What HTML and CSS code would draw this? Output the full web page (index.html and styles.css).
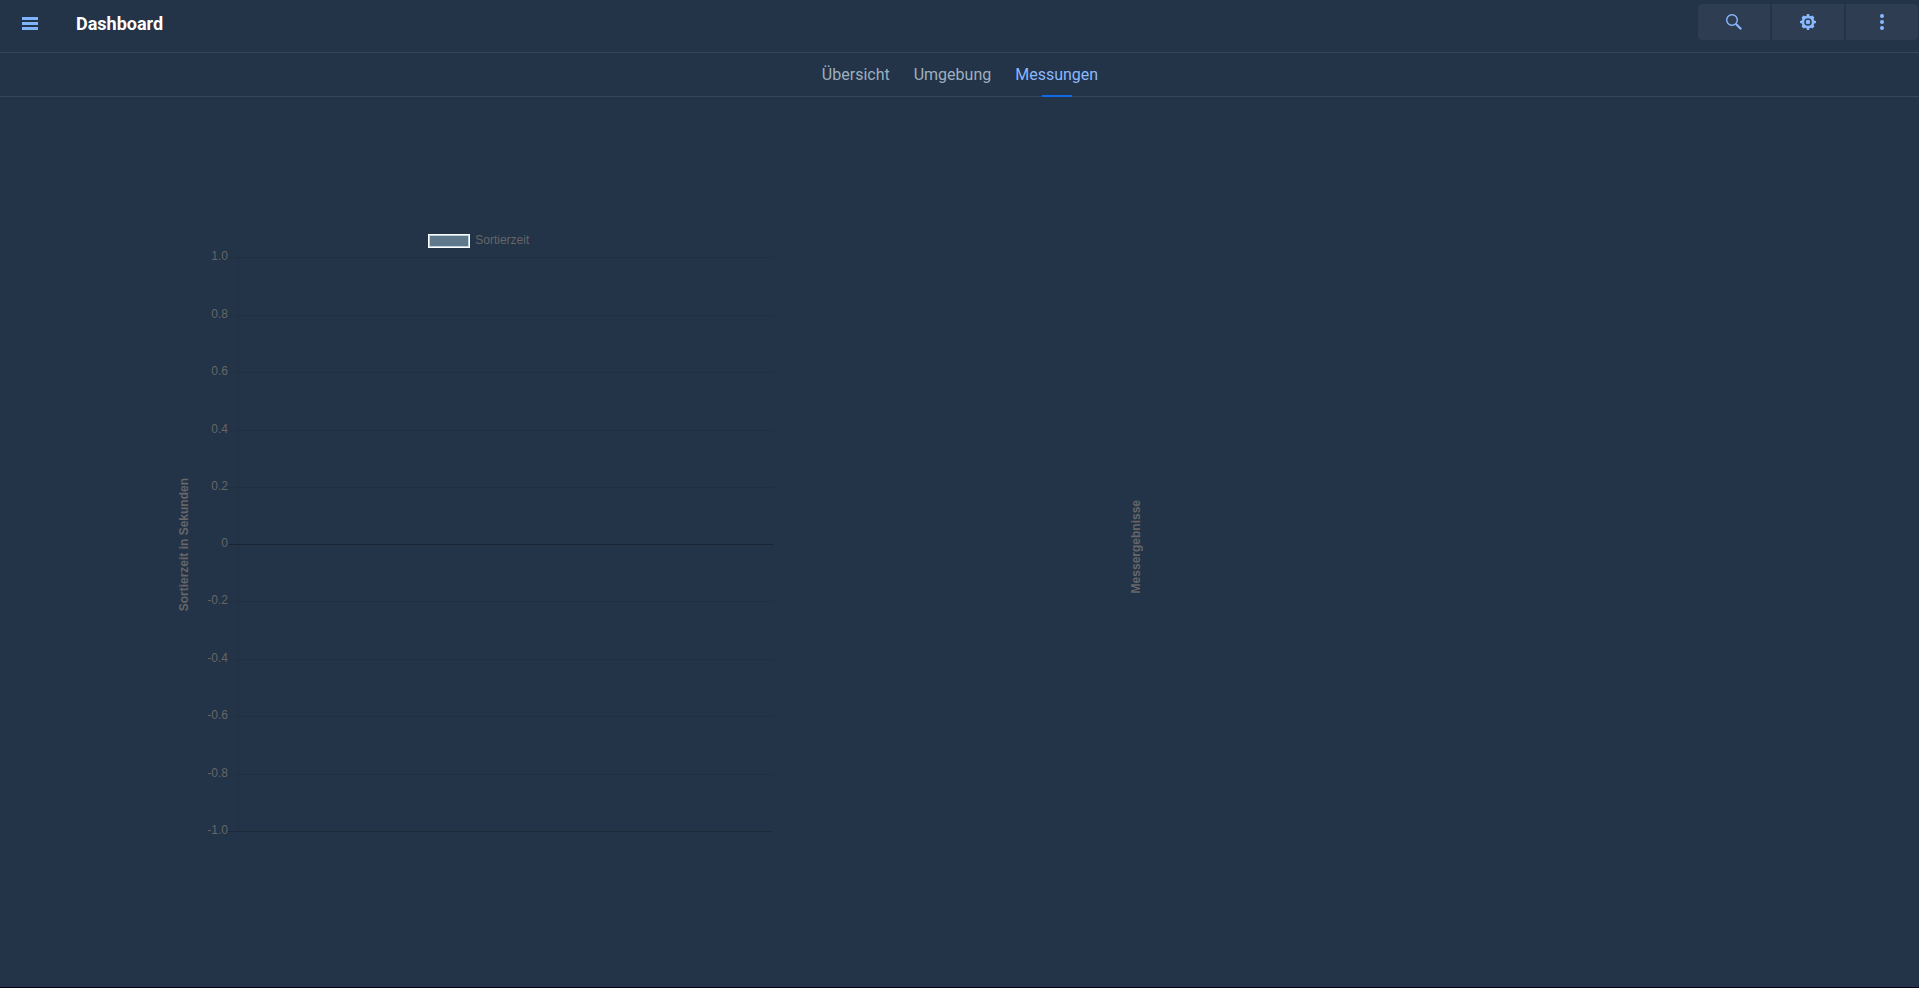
FILE: index.html
```html
<!DOCTYPE html>
<html lang="de">
<head>
<meta charset="utf-8">
<meta name="viewport" content="width=device-width, initial-scale=1">
<title>Dashboard</title>
<link rel="stylesheet" href="styles.css">
</head>
<body>
<header class="topbar">
  <button class="menu-button" type="button" aria-label="Menü">
    <svg class="menu-icon" viewBox="0 0 16 13" aria-hidden="true"><path d="M0 0h16v3H0zM0 5h16v3H0zM0 10h16v3H0z"/></svg>
  </button>
  <h1 class="title">Dashboard</h1>
  <div class="actions">
    <button class="action" type="button" aria-label="Suche">
      <svg class="action-icon" viewBox="0 0 16 16" fill="none" stroke="currentColor" aria-hidden="true"><circle cx="6" cy="6" r="5.3" stroke-width="1.4"/><path d="M10 10l5.2 5.2" stroke-width="2.2"/></svg>
    </button>
    <button class="action" type="button" aria-label="Einstellungen">
      <svg class="action-icon" viewBox="0 0 16 16" aria-hidden="true"><path fill="currentColor" fill-rule="evenodd" d="M7 0h2l.5 1.8 1.3.5L12.5 1.600l1.900 1.900-.7 1.700.5 1.300L16 7v2l-1.800.5-.5 1.300.7 1.700-1.900 1.900-1.700-.7-1.300.5L9 16H7l-.5-1.800-1.300-.5-1.700.7-1.900-1.900.7-1.700-.5-1.300L0 9V7l1.800-.5.5-1.300-.7-1.700 1.900-1.900 1.700.7 1.300-.5zM8 4.200a3.800 3.800 0 1 0 0 7.600 3.800 3.800 0 0 0 0-7.600z"/><circle cx="8" cy="8" r="2.300" fill="currentColor"/></svg>
    </button>
    <button class="action" type="button" aria-label="Mehr">
      <svg class="action-icon" viewBox="0 0 16 16" fill="currentColor" aria-hidden="true"><circle cx="8" cy="2" r="2"/><circle cx="8" cy="8" r="2"/><circle cx="8" cy="14" r="2"/></svg>
    </button>
  </div>
</header>
<nav class="tabs" aria-label="Ansichten">
  <a class="tab" href="#uebersicht">Übersicht</a>
  <a class="tab" href="#umgebung">Umgebung</a>
  <a class="tab tab-active" href="#messungen" aria-current="page">Messungen</a>
</nav>
<main class="charts">
  <section class="chart" aria-label="Sortierzeit">
    <div class="legend"><span class="swatch"></span>Sortierzeit</div>
    <div class="chart-body">
      <div class="axis-title">Sortierzeit in Sekunden</div>
      <div class="scale">
        <div class="step"><span class="tick">1.0</span><span class="cell"></span></div>
        <div class="step"><span class="tick">0.8</span><span class="cell"></span></div>
        <div class="step"><span class="tick">0.6</span><span class="cell"></span></div>
        <div class="step"><span class="tick">0.4</span><span class="cell"></span></div>
        <div class="step"><span class="tick">0.2</span><span class="cell"></span></div>
        <div class="step step-zero"><span class="tick">0</span><span class="cell"></span></div>
        <div class="step"><span class="tick">-0.2</span><span class="cell"></span></div>
        <div class="step"><span class="tick">-0.4</span><span class="cell"></span></div>
        <div class="step"><span class="tick">-0.6</span><span class="cell"></span></div>
        <div class="step"><span class="tick">-0.8</span><span class="cell"></span></div>
        <div class="step-last"><span class="tick">-1.0</span><span class="cell"></span></div>
      </div>
    </div>
  </section>
  <section class="chart" aria-label="Messergebnisse">
    <div class="legend"></div>
    <div class="chart-body chart-empty">
      <div class="axis-title">Messergebnisse</div>
    </div>
  </section>
</main>
</body>
</html>
```
FILE: styles.css
```css
* { box-sizing: border-box; }

body {
  display: flex;
  flex-direction: column;
  min-height: 100vh;
  margin: 0;
  border-bottom: 1px solid #000610;
  background: #233348;
  color: #fff;
  font-family: Roboto, sans-serif;
}

button {
  padding: 0;
  border: 0;
  background: none;
  color: #8ab8ff;
}

.topbar {
  display: flex;
  align-items: flex-start;
  height: 53px;
  padding: 4px 1px 0 8px;
  border-bottom: 1px solid #34475f;
}

.menu-button {
  display: grid;
  place-items: center;
  width: 44px;
  height: 39px;
}

.menu-icon { width: 16px; height: 13px; fill: #7fb2ff; }

.title {
  margin: 0 0 0 24px;
  font-size: 18px;
  font-weight: 700;
  line-height: 40px;
}

.actions {
  display: flex;
  gap: 2px;
  margin-left: auto;
  overflow: hidden;
  border-radius: 4px;
}

.action {
  display: grid;
  place-items: center;
  width: 72px;
  height: 36px;
  background: #2e3d52;
}

.action-icon { width: 16px; height: 16px; }

.tabs {
  display: flex;
  justify-content: center;
  gap: 24px;
  height: 44px;
  padding-left: 1px;
  border-bottom: 1px solid #34475f;
}

.tab {
  position: relative;
  color: #9dafbe;
  font-size: 16px;
  line-height: 44px;
  text-decoration: none;
}

.tab-active { color: #8ab8ff; }

.tab-active::after {
  position: absolute;
  bottom: -1px;
  left: 50%;
  width: 30px;
  height: 2px;
  margin-left: -15px;
  background: #0f6be8;
  content: "";
}

.charts {
  display: grid;
  grid-template-columns: 1fr 1fr;
  justify-items: center;
  flex: 1;
  padding-top: 136px;
  color: #666;
  font-family: "Liberation Sans", Arial, sans-serif;
  font-size: 12px;
  line-height: 14px;
}

.chart { width: 65%; }

.legend {
  display: flex;
  justify-content: center;
  gap: 5px;
  height: 24px;
  padding-right: 2px;
}

.swatch {
  width: 42px;
  height: 14px;
  margin-top: 1px;
  border: 1px solid #fff;
  outline: 1px solid #bed2dc;
  outline-offset: -2px;
  background: #5f788c;
}

.chart-body {
  display: flex;
  align-items: center;
  padding: 0 19px 0 9px;
}

.chart-empty { height: 580px; padding: 0 2px; }

.axis-title {
  width: 14px;
  font-weight: 700;
  text-align: center;
  white-space: nowrap;
  writing-mode: vertical-rl;
  rotate: 180deg;
}

.scale { flex: 1; padding-left: 7px; }

.step,
.step-last {
  display: grid;
  grid-template-columns: 30px 1fr;
}

.step { height: 57px; }

.step:nth-child(odd):not(:nth-child(5)) { height: 58px; }

.step-last { height: 1px; grid-template-rows: 1px; }

.tick {
  height: 14px;
  margin-top: -8px;
  text-align: right;
}

.cell {
  display: grid;
  grid-template-columns: 10px 1fr;
  border-top: 1px solid #202f41;
}

.cell::after {
  grid-column: 2;
  border-left: 1px solid #202f41;
  content: "";
}

.step-zero .cell { border-top-color: #192433; }

.step-last .cell { border-top-color: #1b2938; }
```
